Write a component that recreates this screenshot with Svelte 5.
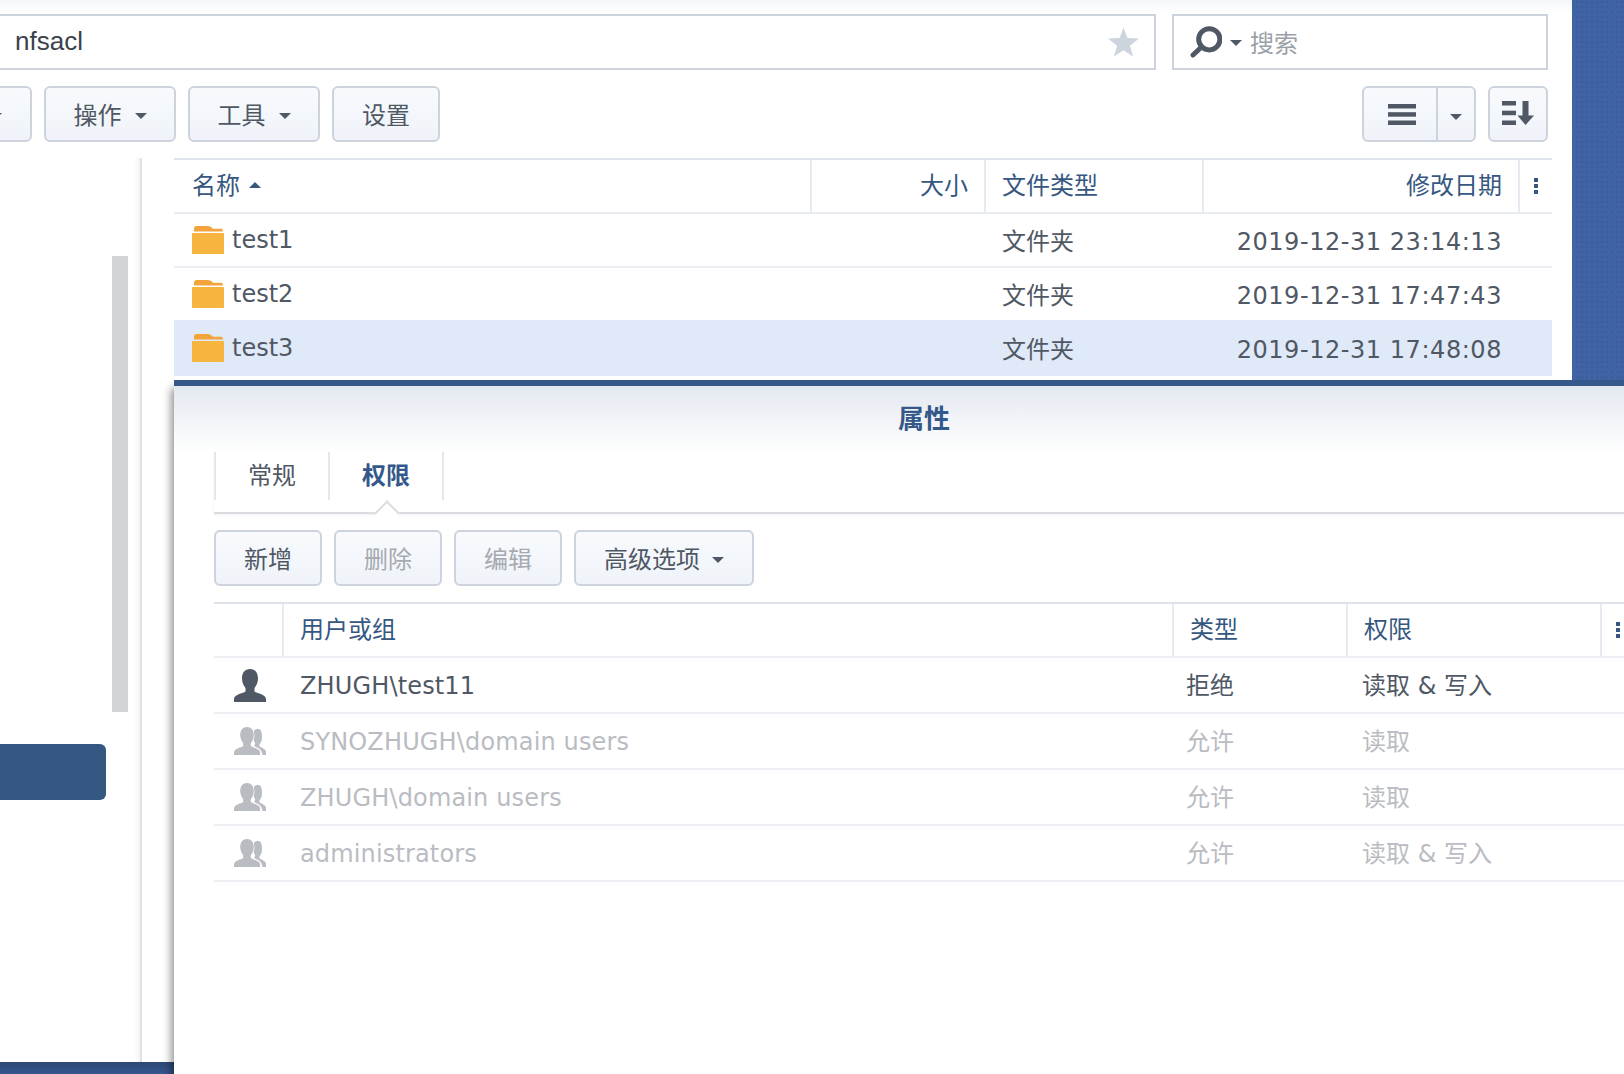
<script>
  const files = [
    { name: 'test1', date: '2019-12-31 23:14:13', selected: false },
    { name: 'test2', date: '2019-12-31 17:47:43', selected: false },
    { name: 'test3', date: '2019-12-31 17:48:08', selected: true }
  ];
  const perms = [
    { name: 'ZHUGH\\test11', type: '拒绝', perm: '读取 & 写入', group: false },
    { name: 'SYNOZHUGH\\domain users', type: '允许', perm: '读取', group: true },
    { name: 'ZHUGH\\domain users', type: '允许', perm: '读取', group: true },
    { name: 'administrators', type: '允许', perm: '读取 & 写入', group: true }
  ];
</script>

<div class="page">
  <div class="window">
    <div class="topbar">
      <div class="address">
        <span class="path">nfsacl</span>
        <svg class="star" viewBox="0 0 32 30"><polygon points="16,0 20,10.8 32,11.4 22.6,18.8 25.9,30 16,23.6 6.1,30 9.4,18.8 0,11.4 12,10.8" /></svg>
      </div>
      <div class="search">
        <svg class="lens" viewBox="0 0 32 32">
          <circle cx="19.3" cy="13.3" r="10.6" />
          <path d="M11.5 21 L3 29" />
        </svg>
        <span class="caret"></span>
        <span class="placeholder">搜索</span>
      </div>
    </div>

    <div class="toolbar">
      <button class="btn first"><span class="caret"></span></button>
      <button class="btn act">操作<span class="caret"></span></button>
      <button class="btn act">工具<span class="caret"></span></button>
      <button class="btn set">设置</button>
      <div class="spacer"></div>
      <div class="seg">
        <div class="seg-main">
          <svg class="burger" viewBox="0 0 28 21"><rect width="28" height="4.5" /><rect y="8.2" width="28" height="4.5" /><rect y="16.5" width="28" height="4.5" /></svg>
        </div>
        <div class="seg-drop"><span class="caret"></span></div>
      </div>
      <button class="btn sort">
        <svg viewBox="0 0 32 24"><rect width="14" height="4.5" /><rect y="9.7" width="14" height="4.5" /><rect y="19.5" width="14" height="4.5" /><path d="M20.5 0h6v14.5H32L23.5 24 15.500 14.500h5z" /></svg>
      </button>
    </div>

    <div class="content">
      <aside class="sidebar">
        <div class="thumb"></div>
        <div class="side-btn"></div>
      </aside>
      <div class="files">
        <div class="frow fhead">
          <div class="cell namehead">名称<span class="up"></span></div>
          <div class="cell sep right">大小</div>
          <div class="cell sep">文件类型</div>
          <div class="cell sep right">修改日期</div>
          <div class="cell sep menu"><i></i><i></i><i></i></div>
        </div>
        {#each files as f}
          <div class="frow fbody" class:selected={f.selected}>
            <div class="cell fname">
              <svg class="folder" viewBox="0 0 32 28">
                <path class="tab" d="M2 2.500Q2 0 4.500 0H16Q19 0 21 2.800H29.500Q31 2.800 31 5.600H2z" />
                <rect class="body" y="7" width="32" height="21" rx="0.800" />
              </svg>
              <span class="latin">{f.name}</span>
            </div>
            <div class="cell"></div>
            <div class="cell typed">文件夹</div>
            <div class="cell right date">{f.date}</div>
            <div class="cell"></div>
          </div>
        {/each}
      </div>
    </div>
  </div>

  <div class="corner"></div>

  <section class="dialog">
    <header class="title">属性</header>
    <div class="inner">
      <div class="tabs">
        <div class="tab">常规</div>
        <div class="tab active">权限</div>
      </div>
      <div class="dbar">
        <button class="btn dbtn">新增</button>
        <button class="btn dbtn off">删除</button>
        <button class="btn dbtn off">编辑</button>
        <button class="btn adv">高级选项<span class="caret"></span></button>
      </div>
      <div class="pgrid">
        <div class="prow phead">
          <div class="cell"></div>
          <div class="cell sep">用户或组</div>
          <div class="cell sep">类型</div>
          <div class="cell sep">权限</div>
          <div class="cell sep menu"><i></i><i></i><i></i></div>
        </div>
        {#each perms as p}
          <div class="prow pbody" class:inherited={p.group}>
            <div class="cell icon">
              {#if p.group}
                <svg class="person" viewBox="0 0 32 28">
                  <path d="M24 2c-3.500 0-5.500 2.500-5.500 6.500 0 2.500 1 5 2.500 7v2c-1 1-1.500 1.500 3 3.500 3 1.500 4 4 4.500 7H32v-3c0-3-4.500-4-6.500-5.500v-2c1.500-2 2.500-4.500 2.500-7C28 4.500 27 2 24 2z" />
                  <path class="front" d="M13 0C8.800 0 6.200 3 6.200 8c0 3 1.300 6.200 3 8.200v2.800C6.500 20.800 0 21.800 0 25.500V28h26v-2.500c0-3.700-6.500-4.700-9.200-6.500v-2.800c1.700-2 3-5.200 3-8.200C19.800 3 17.200 0 13 0z" />
                </svg>
              {:else}
                <svg class="person" viewBox="0 0 32 33">
                  <path d="M16 0c-5 0-8 3.500-8 9.500 0 3.500 1.500 7.200 3.500 9.500v3.500C8.500 24.500 0 25.500 0 30v3h32v-3c0-4.500-8.500-5.500-11.500-7.500V19c2-2.300 3.500-6 3.500-9.500C24 3.500 21 0 16 0z" />
                </svg>
              {/if}
            </div>
            <div class="cell pname">{p.name}</div>
            <div class="cell ptype">{p.type}</div>
            <div class="cell pperm">{p.perm}</div>
            <div class="cell"></div>
          </div>
        {/each}
      </div>
    </div>
  </section>
</div>

<style>
  :global(body) { margin: 0; }

  .page {
    position: relative;
    width: 1624px;
    height: 1074px;
    overflow: hidden;
    font-family: "DejaVu Sans", "Noto Sans CJK SC", sans-serif;
    font-size: 24px;
    color: #4f5864;
    background-color: #4063a4;
    background-image: radial-gradient(circle at 2px 2px, #3b5d9d 1px, transparent 1.6px);
    background-size: 5px 5px;
  }

  .window {
    display: flex;
    flex-direction: column;
    width: 1572px;
    height: 1062px;
    background: linear-gradient(#f4f6fb, #fff 14px);
  }

  .topbar {
    display: flex;
    gap: 16px;
    height: 56px;
    margin-top: 14px;
    padding-right: 24px;
  }
  .address {
    flex: 1;
    display: flex;
    align-items: center;
    justify-content: space-between;
    margin-left: -4px;
    padding: 0 15px 0 17px;
    background: #fff;
    border: 2px solid #ccd3dc;
  }
  .path {
    font-family: "Liberation Sans", sans-serif;
    font-size: 26px;
    color: #3b424c;
    margin-top: -2px;
  }
  .star { width: 31px; height: 30px; fill: #ccd4de; }
  .search {
    width: 376px;
    box-sizing: border-box;
    display: flex;
    align-items: center;
    padding-left: 16px;
    background: #fff;
    border: 2px solid #ccd3dc;
  }
  .lens { width: 32px; height: 32px; fill: none; stroke: #4f5864; stroke-width: 5; stroke-linecap: round; }
  .search .caret { margin-left: 8px; margin-top: 2px; }
  .placeholder { margin-left: 8px; margin-bottom: 2px; color: #9aa0a8; }

  .caret {
    display: inline-block;
    width: 0;
    height: 0;
    border-left: 6px solid transparent;
    border-right: 6px solid transparent;
    border-top: 6px solid #4f5864;
  }
  .btn .caret, .seg-drop .caret { margin-top: 6px; }

  .toolbar {
    display: flex;
    gap: 12px;
    height: 56px;
    margin-top: 16px;
    padding-right: 24px;
  }
  .spacer { flex: 1; }
  .btn {
    box-sizing: border-box;
    display: flex;
    align-items: center;
    justify-content: center;
    height: 56px;
    padding: 0 0 2px;
    font: inherit;
    color: #4f5864;
    background: linear-gradient(#f8fafd, #eff3f9);
    border: 2px solid #ccd3dc;
    border-radius: 6px;
  }
  .first { width: 64px; margin-left: -32px; }
  .first .caret { margin-left: -8px; }
  .act { width: 132px; }
  .act .caret { margin-left: 13px; }
  .set { width: 108px; }
  .seg {
    box-sizing: border-box;
    display: flex;
    width: 114px;
    height: 56px;
    background: linear-gradient(#f8fafd, #eff3f9);
    border: 2px solid #ccd3dc;
    border-radius: 6px;
  }
  .seg-main { flex: 1; display: flex; align-items: center; justify-content: center; }
  .seg-drop { width: 36px; display: flex; align-items: center; justify-content: center; border-left: 2px solid #ccd3dc; }
  .burger { width: 28px; height: 21px; fill: #4f5864; margin-left: 4px; }
  .sort { width: 60px; padding: 0; }
  .sort svg { width: 32px; height: 24px; fill: #4f5864; margin-top: -2px; }

  .content { flex: 1; display: flex; margin-top: 16px; min-height: 0; }
  .sidebar {
    box-sizing: border-box;
    width: 142px;
    padding-top: 98px;
    border-right: 2px solid #dfe1e6;
    box-shadow: inset -7px 0 7px -7px rgba(0, 0, 0, 0.1);
  }
  .thumb { width: 16px; height: 456px; margin-left: 112px; background: #d3d4d6; }
  .side-btn { width: 106px; height: 56px; margin-top: 32px; background: #355883; border-radius: 0 6px 6px 0; }

  .files { width: 1378px; margin-left: 32px; }
  .frow {
    display: grid;
    grid-template-columns: 636px 174px 218px 316px 34px;
    border-bottom: 2px solid #eceef3;
  }
  .fhead {
    height: 52px;
    color: #36577f;
    border-top: 2px solid #dfe4ec;
    border-bottom-color: #e8ebf1;
  }
  .fbody { height: 52px; }
  .selected {
    margin-top: -2px;
    background: #dfe9f7;
    border-top: 2px solid #dfe9f7;
    border-bottom-color: #dfe9f7;
  }
  .cell { box-sizing: border-box; display: flex; align-items: center; min-width: 0; white-space: nowrap; padding-left: 18px; }
  .sep { border-left: 2px solid #e6ebf2; padding-left: 16px; }
  .right { justify-content: flex-end; padding-right: 16px; }
  .fhead .cell, .phead .cell { padding-bottom: 6px; }
  .fhead .menu, .phead .menu { padding-bottom: 0; }
  .namehead { padding-left: 18px; }
  .up {
    width: 0;
    height: 0;
    margin-left: 9px;
    margin-top: 4px;
    border-left: 6px solid transparent;
    border-right: 6px solid transparent;
    border-bottom: 6px solid #36577f;
  }
  .menu { flex-direction: column; justify-content: center; align-items: flex-start; gap: 2px; padding-left: 14px; }
  .menu i { display: block; width: 4px; height: 4px; background: #36577f; }

  .fname { padding-left: 18px; }
  .folder { width: 32px; height: 28px; flex: none; }
  .folder .tab { fill: #f3a43b; }
  .folder .body { fill: #f6b53e; }
  .latin { margin-left: 8px; margin-top: -1px; }
  .typed { padding-left: 18px; padding-bottom: 2px; }
  .date { padding-right: 16px; letter-spacing: 0.55px; padding-top: 4px; }

  .corner {
    position: absolute;
    left: 0;
    right: 0;
    top: 1062px;
    height: 12px;
    background: linear-gradient(#2c4873, #35578f);
  }

  .dialog {
    position: absolute;
    left: 174px;
    top: 380px;
    width: 1500px;
    height: 694px;
    background: #fff;
    border-top: 6px solid #34588a;
    box-shadow: -3px 8px 8px rgba(0, 0, 0, 0.42);
  }
  .title {
    box-sizing: border-box;
    height: 66px;
    padding-bottom: 6px;
    display: flex;
    align-items: center;
    justify-content: center;
    font-size: 26px;
    font-weight: 700;
    color: #34588a;
    background: linear-gradient(#e3e8f0, #fff);
  }
  .inner { padding-left: 40px; }
  .tabs {
    position: relative;
    display: flex;
    height: 60px;
    border-bottom: 2px solid #dadde2;
    box-shadow: 0 1px 2px rgba(0, 0, 0, 0.06);
  }
  .tab {
    box-sizing: border-box;
    width: 114px;
    height: 48px;
    padding-bottom: 6px;
    display: flex;
    align-items: center;
    justify-content: center;
    border-left: 2px solid #e3e7ee;
  }
  .tab.active { width: 116px; color: #34588a; font-weight: 700; border-right: 2px solid #e3e7ee; }
  .tab.active::after {
    content: "";
    position: absolute;
    left: 164px;
    top: 52px;
    width: 16px;
    height: 16px;
    background: #fff;
    border-left: 2px solid #dadde2;
    border-top: 2px solid #dadde2;
    transform: rotate(45deg);
  }
  .dbar { display: flex; gap: 12px; margin-top: 16px; }
  .dbtn { width: 108px; }
  .off { color: #a5a9b0; }
  .adv { width: 180px; }
  .adv .caret { margin-left: 12px; }

  .pgrid { margin-top: 16px; }
  .prow {
    display: grid;
    grid-template-columns: 68px 890px 174px 254px 74px;
    border-bottom: 2px solid #eceef3;
  }
  .phead { height: 52px; color: #36577f; border-top: 2px solid #dfe4ec; }
  .pbody { height: 54px; }
  .inherited { color: #b9bcc2; }
  .icon { padding-left: 20px; }
  .person { width: 32px; height: auto; fill: #4f5864; }
  .inherited .person { fill: #b9bcc2; }
  .front { stroke: #fff; stroke-width: 1.4; paint-order: stroke; }
  .pname { padding-left: 18px; padding-top: 2px; letter-spacing: 0.15px; }
  .ptype { padding-left: 14px; padding-bottom: 4px; }
  .pperm { padding-left: 16px; padding-bottom: 4px; }
</style>
